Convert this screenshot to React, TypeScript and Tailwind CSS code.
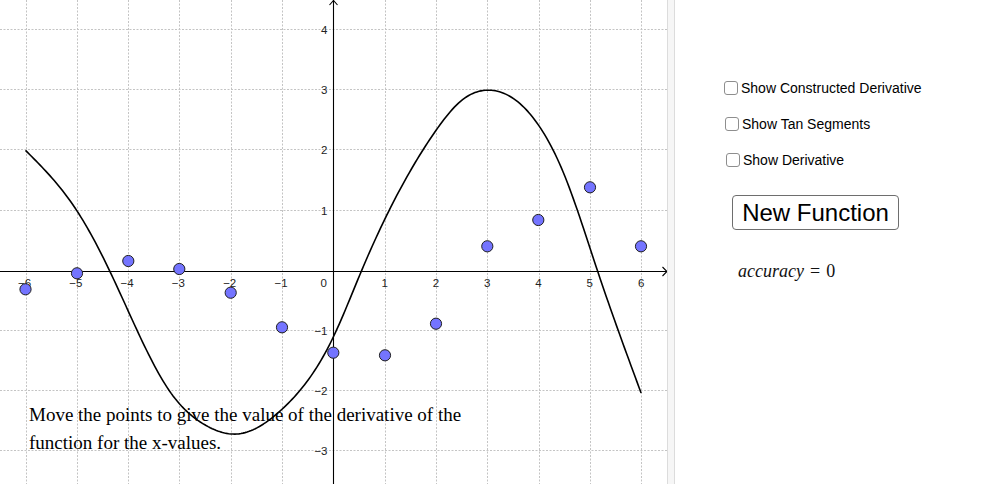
import React from 'react';

// graph coordinate helpers (pixel space of the 667x484 canvas)
const X = (v: number) => 333.3 + 51.3 * v;
const Y = (v: number) => 270.8 - 60.2 * v;
const crisp = (p: number) => Math.round(p) + 0.5;

const xTicks = [-6, -5, -4, -3, -2, -1, 1, 2, 3, 4, 5, 6];
const yTicks = [4, 3, 2, 1, -1, -2, -3];

// key points of the function, read off the reference (graph units)
const knotsX = [-6, -5, -4.36, -3.19, -2.5, -1.86, -1, 0, 0.55, 2, 2.5, 3, 4, 4.5, 5.15, 6];
const knotsY = [2, 1, 0, -2, -2.56, -2.71, -2.3, -1.1, 0, 2.33, 2.83, 3, 2.42, 1.6, 0, -2.03];

const dots: [number, number][] = [
  [25.5, 289.3], [77, 273.3], [128.3, 261], [179.3, 269], [230.7, 292.7],
  [282, 327.3], [333.3, 352.7], [385, 355.3], [436, 323.7], [487.3, 246.3],
  [538.3, 220], [590, 187.3], [641, 246.3],
];

// natural cubic spline through the knots
function spline(xs: number[], ys: number[]) {
  const n = xs.length;
  const h = xs.slice(1).map((x, i) => x - xs[i]);
  const a = new Array(n).fill(0);
  const b = new Array(n).fill(1);
  const c = new Array(n).fill(0);
  const r = new Array(n).fill(0);
  for (let i = 1; i < n - 1; i++) {
    a[i] = h[i - 1];
    b[i] = 2 * (h[i - 1] + h[i]);
    c[i] = h[i];
    r[i] = 6 * ((ys[i + 1] - ys[i]) / h[i] - (ys[i] - ys[i - 1]) / h[i - 1]);
  }
  // thomas algorithm
  for (let i = 1; i < n; i++) {
    const m = a[i] / b[i - 1];
    b[i] -= m * c[i - 1];
    r[i] -= m * r[i - 1];
  }
  const M = new Array(n).fill(0);
  M[n - 1] = r[n - 1] / b[n - 1];
  for (let i = n - 2; i >= 0; i--) M[i] = (r[i] - c[i] * M[i + 1]) / b[i];

  return (x: number) => {
    let i = 0;
    while (i < n - 2 && x > xs[i + 1]) i++;
    const hi = h[i];
    const t1 = xs[i + 1] - x;
    const t0 = x - xs[i];
    return (
      (M[i] * t1 ** 3) / (6 * hi) +
      (M[i + 1] * t0 ** 3) / (6 * hi) +
      (ys[i] / hi - (M[i] * hi) / 6) * t1 +
      (ys[i + 1] / hi - (M[i + 1] * hi) / 6) * t0
    );
  };
}

const f = spline(knotsX, knotsY);

function curvePath() {
  const parts: string[] = [];
  for (let v = -6; v <= 6.0001; v += 0.04) {
    parts.push(`${X(v).toFixed(2)},${Y(f(v)).toFixed(2)}`);
  }
  return 'M' + parts.join(' L');
}

const minus = (n: number) => (n < 0 ? `\u2212${-n}` : `${n}`);

const Graphics: React.FC = () => {
  const axisY = 271.5;
  const axisX = 333.5;
  return (
    <div className="relative w-[667px] h-[484px] shrink-0 overflow-hidden bg-white">
      <svg width={667} height={484} className="block">
        {/* grid */}
        <g stroke="#c4c4c4" strokeWidth={1} strokeDasharray="2 1.5">
          {xTicks.map((k) => (
            <line key={'v' + k} x1={crisp(X(k))} y1={0} x2={crisp(X(k))} y2={484} />
          ))}
          {yTicks.map((k) => (
            <line key={'h' + k} x1={0} y1={crisp(Y(k)) - 1} x2={667} y2={crisp(Y(k)) - 1} />
          ))}
        </g>

        {/* axes */}
        <g stroke="#000" strokeWidth={1.1} fill="none">
          <line x1={0} y1={axisY} x2={667} y2={axisY} />
          <polyline points={`662.5,267 667,${axisY} 662.5,276`} />
          <line x1={axisX} y1={0} x2={axisX} y2={484} />
          <polyline points={`329.5,5 ${axisX},0.5 337.5,5`} />
        </g>

        {/* tick labels */}
        <g fontFamily="'Liberation Sans', Arial, sans-serif" fontSize={11.5} fill="#222">
          {xTicks.map((k) => (
            <text key={'xl' + k} x={X(k) + (k < 0 ? -1 : 0)} y={287} textAnchor="middle">
              {minus(k)}
            </text>
          ))}
          <text x={327} y={287} textAnchor="end">0</text>
          {yTicks.map((k) => (
            <text key={'yl' + k} x={327.5} y={Y(k) + 4} textAnchor="end">
              {minus(k)}
            </text>
          ))}
        </g>

        {/* function */}
        <path d={curvePath()} stroke="#000" strokeWidth={1.6} fill="none" strokeLinejoin="round" />

        {/* derivative guesses */}
        {dots.map(([cx, cy], i) => (
          <circle key={i} cx={cx} cy={cy} r={5.6} fill="#7474ff" stroke="#202020" strokeWidth={1} />
        ))}
      </svg>

      <div className="absolute left-[29px] top-[401px] font-['Liberation_Serif',serif] text-[19px] leading-[28px] text-black">
        <div>Move the points to give the value of the derivative of the</div>
        <div>function for the x-values.</div>
      </div>
    </div>
  );
};

const Check: React.FC<{ label: string; className?: string }> = ({ label, className = '' }) => (
  <label className={`flex items-center h-[20px] ${className}`}>
    <span className="w-[14px] h-[14px] rounded-[3px] border border-[#8e8e8e] bg-white shrink-0" />
    <span className="ml-[3px] text-[14px] text-black">{label}</span>
  </label>
);

export default function App() {
  return (
    <div className="flex w-[996px] h-[484px] bg-white font-['Liberation_Sans',Arial,sans-serif]">
      <Graphics />

      {/* splitter */}
      <div className="w-[8px] h-full shrink-0 bg-[#f6f6f6] border-x border-[#dcdcdc]" />

      <div className="flex-1 h-full flex flex-col pt-[78px]">
        <Check label="Show Constructed Derivative" className="ml-[49px]" />
        <Check label="Show Tan Segments" className="ml-[50px] mt-[16px]" />
        <Check label="Show Derivative" className="ml-[51px] mt-[16px]" />

        <button className="ml-[57px] mt-[25px] w-[167px] h-[35px] rounded-[4px] border-[1.5px] border-[#6e6e6e] bg-white text-[24px] leading-none text-black">
          New Function
        </button>

        <div className="ml-[63px] mt-[31px] h-[20px] leading-[20px] font-['Liberation_Serif',serif] text-[18px] text-[#111]">
          <span className="italic">accuracy</span>
          <span className="ml-[6px]">=</span>
          <span className="ml-[6px]">0</span>
        </div>
      </div>
    </div>
  );
}
